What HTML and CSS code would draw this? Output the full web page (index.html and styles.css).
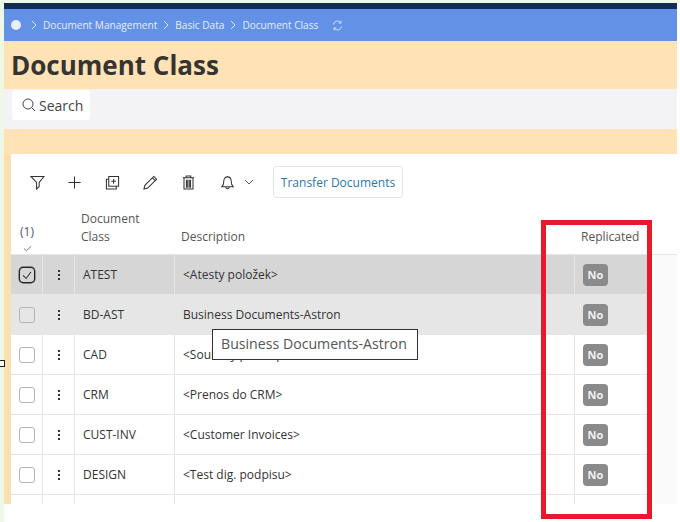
FILE: index.html
```html
<!DOCTYPE html>
<html lang="en">
<head>
<meta charset="utf-8">
<title>Document Class</title>
<link rel="stylesheet" href="styles.css">
</head>
<body>
<div class="app">
  <div class="navy"></div>
  <nav class="crumbs">
    <span class="home"></span>
    <svg class="chev" viewBox="0 0 8 10"><path d="M2 1l4 4-4 4"/></svg>
    <span>Document Management</span>
    <svg class="chev" viewBox="0 0 8 10"><path d="M2 1l4 4-4 4"/></svg>
    <span>Basic Data</span>
    <svg class="chev" viewBox="0 0 8 10"><path d="M2 1l4 4-4 4"/></svg>
    <span>Document Class</span>
    <svg class="refresh" viewBox="0 0 12 12"><path d="M1.500 5A4.500 4.500 0 0 1 9.600 3M10.500 7A4.500 4.500 0 0 1 2.400 9M9.800 .8v2.600H7.200M2.200 11.200V8.600h2.600"/></svg>
  </nav>
  <header class="title"><h1>Document Class</h1></header>
  <div class="searchbar">
    <button class="search">
      <svg viewBox="0 0 14 14"><circle cx="6" cy="6" r="5"/><path d="M9.700 9.700L13 13"/></svg>
      <span>Search</span>
    </button>
  </div>
  <div class="spacer"></div>
  <main class="outer">
    <section class="card">
      <div class="toolbar">
        <svg class="ic i-filter" viewBox="0 0 16 16"><path d="M1 1.500h14L9.800 8v4.200L7 15V8z"/></svg>
        <svg class="ic i-plus" viewBox="0 0 16 16"><path d="M8 1.500v13M1.500 8h13"/></svg>
        <svg class="ic i-copy" viewBox="0 0 16 16"><path d="M4 1.500h10.500V12H4zM4 4.500H1.500V15H12v-3M9.200 4.200v5M6.700 6.700h5"/></svg>
        <svg class="ic i-edit" viewBox="0 0 16 16"><path d="M11.500 1.500l3 3L5 14l-4 1 1-4zM10 3l3 3"/></svg>
        <svg class="ic i-trash" viewBox="0 0 16 16"><path d="M2 3h12M5.500 3V1h5v2M3.200 3v12h9.600V3M5.800 5v8.500M7.200 5v8.500M8.800 5v8.500M10.200 5v8.500"/></svg>
        <svg class="ic i-bell" viewBox="0 0 16 16"><path d="M2 12.500c1.500-1.500 2-2.500 2-5.500C4 4 5.500 2 8 2s4 2 4 5c0 3 .5 4 2 5.500zM6.200 13c0 2.300 3.600 2.300 3.600 0M8 1v1"/></svg>
        <svg class="ic i-down" viewBox="0 0 10 6"><path d="M1 1l4 4 4-4"/></svg>
        <button class="transfer">Transfer Documents</button>
      </div>
      <div class="row head">
        <div class="c-sel"><span>(1)</span><svg viewBox="0 0 10 7"><path d="M1 3.500L3.800 6 9 1"/></svg></div>
        <div></div>
        <div class="c-head">Document<br>Class</div>
        <div class="c-head">Description</div>
        <div class="c-head">Replicated</div>
      </div>
      <div class="tbody">
        <div class="rows">
          <div class="row selected">
            <div class="cell"><span class="box checked"><svg viewBox="0 0 16 16"><path d="M3.500 8.500L7 12l5.500-7.500"/></svg></span></div>
            <div class="cell"><span class="dots"><i></i><i></i><i></i></span></div>
            <div class="cell text">ATEST</div>
            <div class="cell text">&lt;Atesty položek&gt;</div>
            <div class="cell"><span class="badge">No</span></div>
          </div>
          <div class="row hover">
            <div class="cell"><span class="box"></span></div>
            <div class="cell"><span class="dots"><i></i><i></i><i></i></span></div>
            <div class="cell text">BD-AST</div>
            <div class="cell text">Business Documents-Astron</div>
            <div class="cell"><span class="badge">No</span></div>
          </div>
          <div class="row">
            <div class="cell"><span class="box"></span></div>
            <div class="cell"><span class="dots"><i></i><i></i><i></i></span></div>
            <div class="cell text">CAD</div>
            <div class="cell text">&lt;Soubory pro import&gt;</div>
            <div class="cell"><span class="badge">No</span></div>
          </div>
          <div class="row">
            <div class="cell"><span class="box"></span></div>
            <div class="cell"><span class="dots"><i></i><i></i><i></i></span></div>
            <div class="cell text">CRM</div>
            <div class="cell text">&lt;Prenos do CRM&gt;</div>
            <div class="cell"><span class="badge">No</span></div>
          </div>
          <div class="row">
            <div class="cell"><span class="box"></span></div>
            <div class="cell"><span class="dots"><i></i><i></i><i></i></span></div>
            <div class="cell text">CUST-INV</div>
            <div class="cell text">&lt;Customer Invoices&gt;</div>
            <div class="cell"><span class="badge">No</span></div>
          </div>
          <div class="row">
            <div class="cell"><span class="box"></span></div>
            <div class="cell"><span class="dots"><i></i><i></i><i></i></span></div>
            <div class="cell text">DESIGN</div>
            <div class="cell text">&lt;Test dig. podpisu&gt;</div>
            <div class="cell"><span class="badge">No</span></div>
          </div>
          <div class="row">
            <div class="cell"></div><div class="cell"></div><div class="cell"></div><div class="cell"></div><div class="cell"></div>
          </div>
        </div>
      </div>
    </section>
  </main>
</div>
<div class="tooltip">Business Documents-Astron</div>
<div class="redbox"></div>
<span class="handle h1"></span>
<span class="handle h2"></span>
</body>
</html>
```
FILE: styles.css
```css
* { box-sizing: border-box; }
html, body { margin: 0; height: 100%; }
body {
  width: 680px;
  height: 522px;
  overflow: hidden;
  position: relative;
  background: #fff;
  font-family: "Open Sans", "Liberation Sans", sans-serif;
  color: #333;
}
body::before {
  content: "";
  position: absolute;
  left: 0; top: 0;
  width: 4px; height: 522px;
  background: #eef8e4;
}
body::after {
  content: "";
  position: absolute;
  left: 0; top: 0;
  width: 680px; height: 3px;
  background: #eef8e4;
}
.app {
  margin: 3px 3px 0 4px;
  height: 501px;
  display: flex;
  flex-direction: column;
  overflow: hidden;
}
.navy { height: 6px; background: #122c55; flex: none; }
.crumbs {
  height: 32px;
  flex: none;
  background: #6391e6;
  color: #e6edfb;
  font-size: 10.1px;
  display: flex;
  align-items: center;
  padding-left: 7px;
}
.home {
  width: 10px; height: 10px;
  border-radius: 50%;
  background: #e9eef9;
  margin-right: 4px;
}
.chev {
  width: 8px; height: 10px;
  fill: none;
  stroke: #dfe8fa;
  stroke-width: 1;
  margin-right: 5px;
}
.crumbs span + .chev { margin-left: 5px; }
.refresh {
  width: 11px; height: 11px;
  fill: none;
  stroke: #dfe8fa;
  stroke-width: 1;
  margin-left: 14px;
}
.title {
  height: 48px;
  flex: none;
  background: #ffe3b6;
  padding-left: 7px;
  display: flex;
  align-items: center;
}
.title h1 {
  margin: 0;
  font-size: 26px;
  font-weight: 700;
  line-height: 1;
  color: #363330;
}
.searchbar {
  height: 40px;
  flex: none;
  background: #f3f3f5;
  padding: 1px 0 0 8px;
}
.search {
  width: 78px; height: 30px;
  background: #fff;
  border: 0;
  border-radius: 3px;
  padding: 0 0 0 10px;
  display: flex;
  align-items: center;
  gap: 3px;
  font: 14px "Open Sans", sans-serif;
  color: #444;
}
.search svg {
  width: 14px; height: 14px;
  fill: none;
  stroke: #444;
  stroke-width: 1;
}
.spacer { height: 25px; flex: none; background: #ffe3b6; }
.outer {
  flex: 1;
  min-height: 0;
  background: #fff;
  border-left: 7px solid #fbdfae;
  overflow: hidden;
}
.card {
  height: 100%;
  background: #fff;
  display: flex;
  flex-direction: column;
  overflow: hidden;
}
.toolbar {
  height: 56px;
  flex: none;
  display: flex;
  align-items: center;
  padding: 0 0 0 19px;
}
.ic {
  width: 15px; height: 15px;
  flex: none;
  fill: none;
  stroke: #333;
  stroke-width: 1.1;
}
.i-plus { margin-left: 22px; }
.i-copy { margin-left: 23px; }
.i-edit { margin-left: 23px; }
.i-trash { margin-left: 23px; }
.i-bell { margin-left: 24px; }
.i-down { width: 10px; height: 6px; margin-left: 9px; stroke: #555; stroke-width: 1; }
.transfer {
  margin-left: 19px;
  width: 130px; height: 32px;
  padding: 0;
  background: #fff;
  border: 1px solid #e4e6e8;
  border-radius: 3px;
  color: #1f78b8;
  font: 12px "Open Sans", sans-serif;
}
.tbody {
  flex: 1;
  min-height: 0;
  background: #f9f9f9;
  border-top: 1px solid #e6e6e6;
}
.rows { width: 644px; height: 100%; background: #fff; overflow: hidden; }
.row {
  display: grid;
  grid-template-columns: 32px 32px 100px 400px 1fr;
  width: 637px;
  height: 40px;
  flex: none;
  border-bottom: 1px solid #e6e6e6;
  font-size: 12px;
}
.head {
  height: 44px;
  border-bottom: 0;
  color: #555;
}
.c-sel {
  display: flex;
  flex-direction: column;
  align-items: center;
  justify-content: flex-end;
  padding-bottom: 3px;
  font-size: 12px;
  line-height: 14px;
  color: #555;
}
.c-sel svg {
  width: 9px; height: 7px;
  margin-top: 6px;
  fill: none;
  stroke: #666;
  stroke-width: 1;
}
.c-head {
  align-self: end;
  padding: 0 0 9px 6px;
  line-height: 18px;
}
.cell {
  display: flex;
  align-items: center;
  justify-content: center;
  border-right: 1px solid #e6e6e6;
}
.cell.text { justify-content: flex-start; padding-left: 8px; color: #333; }
.cell:last-child { justify-content: flex-start; padding-left: 8px; border-right: 0; }
.selected { background: #d6d6d6; }
.hover { background: #e6e6e6; }
.box {
  width: 16px; height: 16px;
  display: block;
  background: #fff;
  border: 1px solid #b4b4b4;
  border-radius: 3px;
}
.hover .box { background: #e6e6e6; }
.box.checked {
  border-color: #222;
  background: #d6d6d6;
  border-radius: 4px;
  box-shadow: 0 0 0 .4px #333;
}
.box.checked svg {
  display: block;
  width: 14px; height: 14px;
  fill: none;
  stroke: #333;
  stroke-width: 1.2;
}
.dots { display: flex; flex-direction: column; gap: 2px; }
.dots i { display: block; width: 2px; height: 2px; background: #333; }
.badge {
  width: 25px; height: 22px;
  display: flex;
  align-items: center;
  justify-content: center;
  background: #8a8a8a;
  border-radius: 4px;
  color: #f2f2f2;
  font-size: 11px;
  font-weight: 700;
}
.tooltip {
  position: absolute;
  left: 212px; top: 329px;
  width: 206px; height: 31px;
  padding-left: 8px;
  background: #fff;
  border: 1px solid #333;
  color: #555;
  font-size: 14.15px;
  line-height: 28px;
  white-space: nowrap;
}
.redbox {
  position: absolute;
  left: 541px; top: 220px;
  width: 111px; height: 299px;
  border: 5px solid #e8192c;
}
.handle {
  position: absolute;
  background: #fff;
  border: 1px solid #222;
}
.h1 { left: -2px; top: 360px; width: 7px; height: 7px; }
.h2 { left: -2px; top: -4px; width: 7px; height: 7px; }
```
